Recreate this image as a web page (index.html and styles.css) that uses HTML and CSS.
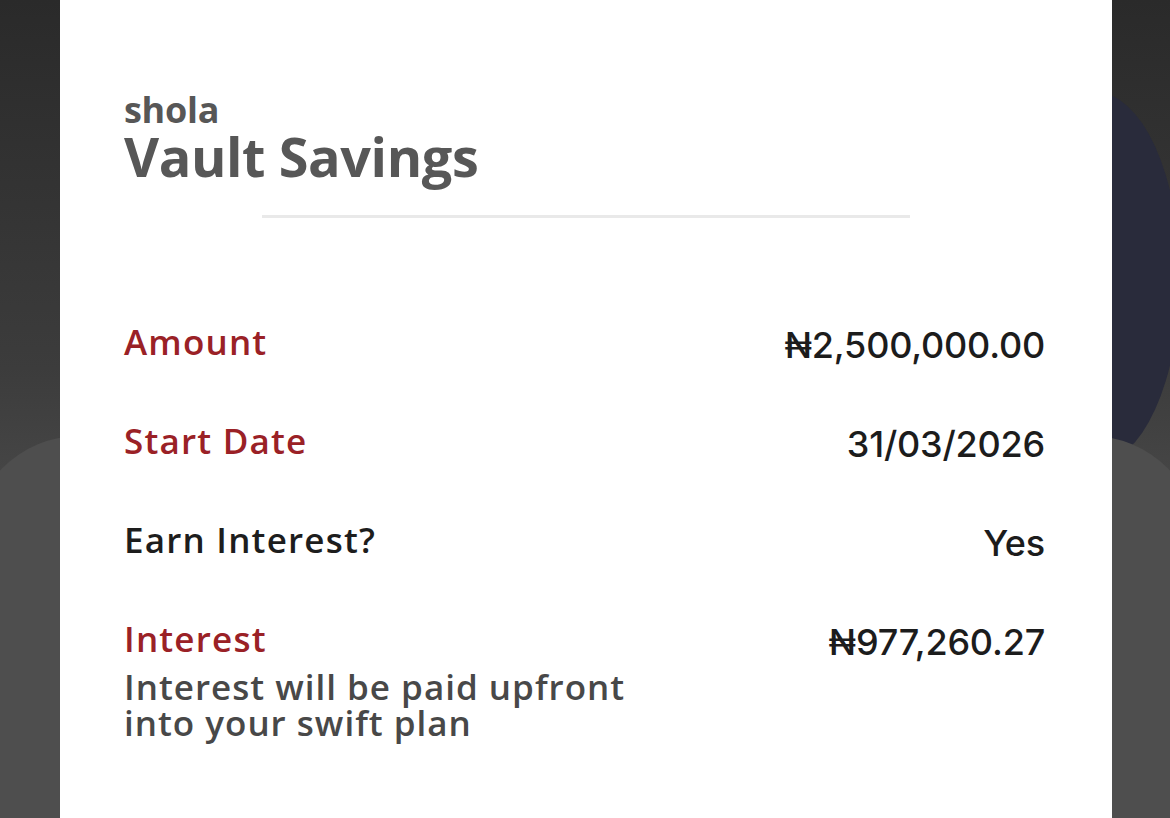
FILE: index.html
```html
<!DOCTYPE html>
<html lang="en">
<head>
<meta charset="utf-8">
<title>Vault Savings</title>
<link rel="stylesheet" href="styles.css">
</head>
<body>
<div class="stage">
  <div class="blob-navy"></div>
  <div class="blob-sheet"></div>
  <main class="card">
    <header class="head">
      <div class="owner">shola</div>
      <h1 class="title">Vault Savings</h1>
    </header>
    <hr class="divider">
    <section class="rows">
      <div class="row">
        <div class="label red">Amount</div>
        <div class="value">₦2,500,000.00</div>
      </div>
      <div class="row">
        <div class="label red">Start Date</div>
        <div class="value">31/03/2026</div>
      </div>
      <div class="row">
        <div class="label dark">Earn Interest?</div>
        <div class="value">Yes</div>
      </div>
      <div class="row">
        <div class="label-group">
          <div class="label red">Interest</div>
          <div class="note">Interest will be paid upfront<br>into your swift plan</div>
        </div>
        <div class="value">₦977,260.27</div>
      </div>
    </section>
  </main>
</div>
</body>
</html>
```
FILE: styles.css
```css
* { box-sizing: border-box; }
html, body { margin: 0; padding: 0; }
body {
  width: 1170px;
  height: 818px;
  overflow: hidden;
  background: linear-gradient(180deg, #2a2a2a 0%, #3c3c3c 45%, #474747 60%);
}
.stage {
  position: relative;
  width: 1170px;
  height: 818px;
  overflow: hidden;
  display: flex;
}
.blob-navy {
  position: absolute;
  left: 1010px;
  top: 92px;
  width: 170px;
  height: 372px;
  border-radius: 50%;
  background: #292b3b;
}
.blob-sheet {
  position: absolute;
  left: -30px;
  top: 436px;
  width: 1230px;
  height: 382px;
  border-radius: 110px 110px 0 0;
  background: #4e4e4e;
}
.card {
  position: relative;
  margin-left: 60px;
  width: 1052px;
  height: 818px;
  background: #ffffff;
  padding: 90px 67px 0 64px;
  font-family: "Open Sans", "Noto Sans", sans-serif;
}
.head { color: #575757; }
.owner {
  font-size: 36px;
  font-weight: 700;
  line-height: 40px;
  letter-spacing: -0.3px;
}
.title {
  margin: 0;
  font-size: 54px;
  font-weight: 700;
  line-height: 52px;
  letter-spacing: -0.4px;
}
.divider {
  border: 0;
  height: 3px;
  background: #e9e9e9;
  width: 648px;
  margin: 33px 0 0 138px;
}
.rows {
  margin-top: 103px;
  display: flex;
  flex-direction: column;
  gap: 54px;
}
.row {
  display: flex;
  justify-content: space-between;
  align-items: flex-start;
}
.label {
  font-size: 35px;
  font-weight: 600;
  line-height: 42px;
  letter-spacing: 1.2px;
}
.red { color: #9a2126; }
.dark { color: #1d1d1d; }
.note {
  color: #484848;
  font-size: 35px;
  font-weight: 600;
  line-height: 36px;
  margin-top: 9px;
  letter-spacing: 1px;
}
.value {
  font-family: "Inter", "Liberation Sans", sans-serif;
  font-size: 36px;
  font-weight: 500;
  line-height: 42px;
  color: #1c1c1c;
  margin-top: 3px;
  letter-spacing: -0.2px;
}
```
